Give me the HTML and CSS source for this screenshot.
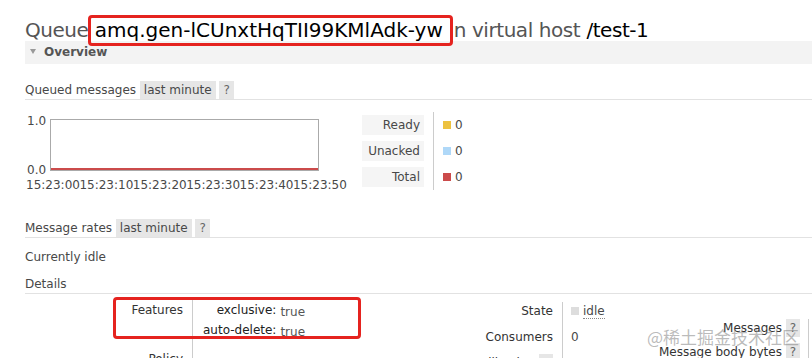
FILE: index.html
```html
<!DOCTYPE html>
<html lang="en">
<head>
    <meta charset="UTF-8">
    <meta name="viewport" content="width=device-width, initial-scale=1.0">
    <title>Queue amq.gen-lCUnxtHqTII99KMlAdk-yw</title>
    <link rel="stylesheet" href="styles.css">
</head>
<body>
    <div class="page">
        <h1><span class="tight">Queue</span> <b class="mark">amq.gen-lCUnxtHqTII99KMlAdk-yw</b><span class="tight"> in virtual host</span> <b class="tight">/test-1</b></h1>

        <div class="section">
            <h2 class="section-h"><span class="arrow"></span>Overview</h2>

            <div class="rate-head">Queued messages <span class="tag">last minute</span> <span class="help">?</span></div>
            <div class="chart-row">
                <div class="chart">
                    <div class="plot-wrap">
                        <div class="yaxis"><span>1.0</span><span>0.0</span></div>
                        <div class="plot"><div class="series"></div></div>
                    </div>
                    <div class="xaxis">
                        <span>15:23:00</span><span>15:23:10</span><span>15:23:20</span><span>15:23:30</span><span>15:23:40</span><span>15:23:50</span>
                    </div>
                </div>
                <table class="legend">
                    <tr><th><div class="lbl">Ready</div></th><td><span class="sq ready"></span>0</td></tr>
                    <tr><th><div class="lbl">Unacked</div></th><td><span class="sq unacked"></span>0</td></tr>
                    <tr><th><div class="lbl">Total</div></th><td><span class="sq total"></span>0</td></tr>
                </table>
            </div>

            <div class="rate-head second">Message rates <span class="tag">last minute</span> <span class="help">?</span></div>
            <p class="idle">Currently idle</p>

            <div class="sub-head">Details</div>
            <div class="details">
                <div class="col col-left">
                    <table class="facts">
                        <tr>
                            <th>Features</th>
                            <td>
                                <table class="features">
                                    <tr><td class="fk">exclusive:</td><td><span class="fv">true</span></td></tr>
                                    <tr><td class="fk">auto-delete:</td><td><span class="fv">true</span></td></tr>
                                </table>
                            </td>
                        </tr>
                        <tr><th>Policy</th><td></td></tr>
                    </table>
                    <div class="annot"></div>
                </div>
                <div class="col col-mid">
                    <table class="facts mid">
                        <tr><th>State</th><td><span class="state-sq"></span><span class="state">idle</span></td></tr>
                        <tr><th>Consumers</th><td>0</td></tr>
                        <tr><th>Consumer utilisation <span class="help">?</span></th><td></td></tr>
                    </table>
                </div>
                <div class="col col-right">
                    <table class="facts right">
                        <tr><th>Messages <span class="help">?</span></th><td>0</td><td>0</td><td>0</td></tr>
                        <tr><th>Message body bytes <span class="help">?</span></th><td>0 B</td><td>0 B</td><td>0 B</td></tr>
                    </table>
                </div>
            </div>
        </div>
    </div>
    <div class="watermark">@稀土掘金技术社区</div>
</body>
</html>
```
FILE: styles.css
```css
html, body {
    margin: 0;
    overflow: hidden;
}
body {
    font-family: "DejaVu Sans", Verdana, sans-serif;
    font-size: 12px;
    color: #484848;
    background: #fff;
    position: relative;
}
.page {
    padding-left: 25px;
}
h1 {
    margin: 0;
    padding-top: 20px;
    font-size: 20px;
    line-height: 21px;
    font-weight: normal;
    color: #555;
    white-space: nowrap;
}
h1 b {
    font-weight: normal;
    color: #000;
}
h1 .tight {
    letter-spacing: -0.45px;
}
.mark {
    position: relative;
}
.mark::after {
    content: "";
    position: absolute;
    left: -7px;
    right: -10px;
    top: -3px;
    bottom: -4px;
    border: 3px solid #e5231f;
    border-radius: 4px;
}
.section-h {
    margin: 0;
    height: 23px;
    line-height: 23px;
    background: #f3f3f3;
    font-size: 12px;
    font-weight: bold;
    color: #555;
    padding-left: 5px;
}
.arrow {
    display: inline-block;
    width: 0;
    height: 0;
    border-left: 3.5px solid transparent;
    border-right: 3.5px solid transparent;
    border-top: 5px solid #999;
    margin-right: 8px;
    vertical-align: 2px;
}
.rate-head {
    margin-top: 17px;
    height: 18px;
    line-height: 18px;
    border-bottom: 1px solid #e2e2e2;
    white-space: nowrap;
}
.rate-head.second {
    margin-top: 27px;
}
.tag, .help {
    display: inline-block;
    background: #e6e6e6;
    padding: 0 4px;
    line-height: 18px;
}
.help {
    color: #666;
}
.chart-row {
    display: flex;
    align-items: flex-start;
}
.chart {
    width: 337px;
    flex: none;
    padding-top: 19px;
}
.plot-wrap {
    display: flex;
    align-items: flex-start;
}
.yaxis {
    width: 25px;
    height: 61px;
    margin-top: -4px;
    padding-left: 2px;
    box-sizing: border-box;
    display: flex;
    flex-direction: column;
    justify-content: space-between;
    line-height: 12px;
}
.plot {
    width: 267px;
    height: 50px;
    border: 1px solid #aaa;
    display: flex;
    align-items: flex-end;
}
.series {
    width: 100%;
    height: 2px;
    background: #cb4b4b;
}
.xaxis {
    display: flex;
    margin-top: 2px;
    padding-left: 1px;
    line-height: 14px;
    white-space: nowrap;
}
.xaxis span {
    flex: none;
    width: 53.4px;
}
.legend {
    margin-top: 12px;
    border-collapse: collapse;
}
.legend th {
    padding: 3px 9px 3px 0;
    font-weight: normal;
}
.lbl {
    width: 58px;
    height: 20px;
    line-height: 20px;
    padding-right: 4px;
    background: #f5f5f5;
    text-align: right;
}
.legend td {
    border-left: 1px solid #ccc;
    padding: 0 0 0 9px;
}
.sq {
    display: inline-block;
    width: 8px;
    height: 8px;
    margin-right: 4px;
    vertical-align: 0;
}
.sq.ready { background: #edc240; }
.sq.unacked { background: #afd8f8; }
.sq.total { background: #cb4b4b; }
.idle {
    margin: 10px 0 0;
    line-height: 18px;
}
.sub-head {
    margin-top: 9px;
    height: 18px;
    line-height: 18px;
    border-bottom: 1px solid #e2e2e2;
}
.details {
    display: flex;
    align-items: flex-start;
    margin-top: 6px;
}
.col {
    flex: none;
}
.col-left {
    width: 378px;
    position: relative;
}
.col-mid {
    width: 256px;
    padding-top: 2px;
}
.col-right {
    padding-top: 19px;
}
.facts {
    border-collapse: collapse;
}
.facts th {
    font-weight: normal;
    color: #333;
    text-align: right;
    vertical-align: top;
    white-space: nowrap;
    border-right: 1px solid #ccc;
    padding: 0 9px 9px 0;
    line-height: 20px;
}
.facts td {
    vertical-align: top;
    padding: 0 0 9px 10px;
    line-height: 20px;
}
.col-left .facts th {
    width: 158px;
}
.features {
    border-collapse: collapse;
}
.features td {
    padding: 0;
}
.features .fk {
    text-align: right;
    color: #222;
    padding-right: 4px;
}
.fv {
    color: #555;
    line-height: 12px;
    vertical-align: -2px;
}
.annot {
    position: absolute;
    left: 88px;
    top: -3px;
    width: 248px;
    height: 42px;
    box-sizing: border-box;
    border: 3px solid #e5231f;
    border-radius: 4px;
}
.mid th, .mid td {
    line-height: 18px;
    padding-bottom: 8px;
}
.mid th {
    width: 150px;
}
.mid td {
    padding-left: 8px;
}
.state-sq {
    display: inline-block;
    width: 8px;
    height: 8px;
    background: #ddd;
    margin-right: 4px;
}
.state {
    border-bottom: 1px dotted #888;
}
.right th, .right td {
    line-height: 18px;
    padding-bottom: 6px;
}
.right th {
    width: 141px;
    padding-right: 8px;
}
.right td {
    padding-left: 20px;
    text-align: right;
}
.watermark {
    position: absolute;
    left: 647px;
    top: 325px;
    font-family: "Noto Sans CJK SC", sans-serif;
    font-size: 17px;
    line-height: 24px;
    color: rgba(120, 120, 120, 0.5);
    white-space: nowrap;
}
```
